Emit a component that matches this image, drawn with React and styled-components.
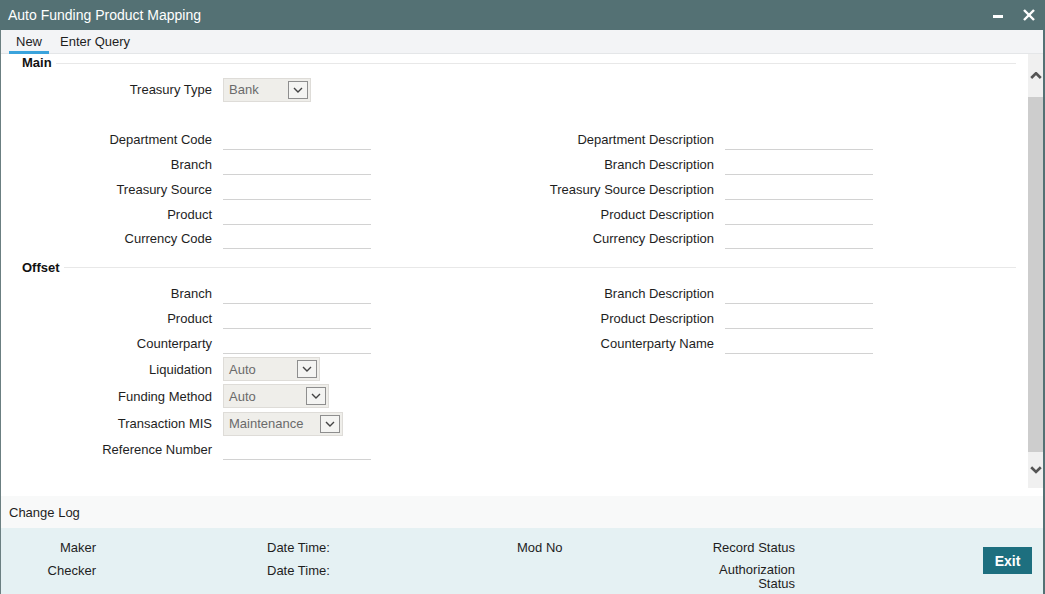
import React from "react";
import styled, { createGlobalStyle } from "styled-components";

const GlobalStyle = createGlobalStyle`
  html, body {
    margin: 0;
    padding: 0;
    background: #ffffff;
  }
  body {
    font-family: "Liberation Sans", Arial, sans-serif;
    font-size: 13px;
    color: #1e1e1e;
  }
`;

const mainLeft = [
    "Department Code",
    "Branch",
    "Treasury Source",
    "Product",
    "Currency Code",
];

const mainRight = [
    "Department Description",
    "Branch Description",
    "Treasury Source Description",
    "Product Description",
    "Currency Description",
];

const ChevronDown = ({ size = 10, stroke = "#444", width = 1.4 }) => (
    <svg width={size} height={size * 0.6} viewBox="0 0 10 6">
        <polyline points="1,1 5,5 9,1" fill="none" stroke={stroke} strokeWidth={width} />
    </svg>
);

const ChevronUp = ({ size = 10, stroke = "#444", width = 1.4 }) => (
    <svg width={size} height={size * 0.6} viewBox="0 0 10 6">
        <polyline points="1,5 5,1 9,5" fill="none" stroke={stroke} strokeWidth={width} />
    </svg>
);

const SelectBox = ({ value, width }) => (
    <Select width={width}>
        <SelectValue>{value}</SelectValue>
        <ArrowBox>
            <ChevronDown size={10} />
        </ArrowBox>
    </Select>
);

const FieldPair = ({ label, labelWidth, children }) => (
    <Pair labelWidth={labelWidth}>
        <Label>{label}</Label>
        {children || <TextInput />}
    </Pair>
);

const App = () => {
    return (
        <Window>
            <GlobalStyle />
            <TitleBar>
                <Title>Auto Funding Product Mapping</Title>
                <TitleControls>
                    <svg width="11" height="11" viewBox="0 0 11 11">
                        <rect x="0" y="5" width="10" height="3" fill="#fff" />
                    </svg>
                    <svg width="12" height="12" viewBox="0 0 12 12">
                        <line x1="1" y1="1" x2="11" y2="11" stroke="#fff" strokeWidth="2.4" />
                        <line x1="11" y1="1" x2="1" y2="11" stroke="#fff" strokeWidth="2.4" />
                    </svg>
                </TitleControls>
            </TitleBar>
            <Frame>
                <TabBar>
                    <Tab active>New</Tab>
                    <Tab>Enter Query</Tab>
                </TabBar>
                <Body>
                    <FormArea>
                        <SectionHeading>Main</SectionHeading>
                        <Row height={28} style={{ marginTop: 5.5 }}>
                            <FieldPair label="Treasury Type" labelWidth={190}>
                                <SelectBox value="Bank" width={88} />
                            </FieldPair>
                        </Row>
                        <RowGroup top={24}>
                            {mainLeft.map((label, i) => (
                                <Row key={label} height={24.75}>
                                    <FieldPair label={label} labelWidth={190} />
                                    <FieldPair label={mainRight[i]} labelWidth={343} />
                                </Row>
                            ))}
                        </RowGroup>
                        <SectionHeading style={{ marginTop: 9.5 }}>Offset</SectionHeading>
                        <RowGroup top={6.5}>
                            <Row height={24.75}>
                                <FieldPair label="Branch" labelWidth={190} />
                                <FieldPair label="Branch Description" labelWidth={343} />
                            </Row>
                            <Row height={24.75}>
                                <FieldPair label="Product" labelWidth={190} />
                                <FieldPair label="Product Description" labelWidth={343} />
                            </Row>
                            <Row height={24.75}>
                                <FieldPair label="Counterparty" labelWidth={190} />
                                <FieldPair label="Counterparty Name" labelWidth={343} />
                            </Row>
                            <Row height={27.25}>
                                <FieldPair label="Liquidation" labelWidth={190}>
                                    <SelectBox value="Auto" width={97} />
                                </FieldPair>
                            </Row>
                            <Row height={27.25}>
                                <FieldPair label="Funding Method" labelWidth={190}>
                                    <SelectBox value="Auto" width={106} />
                                </FieldPair>
                            </Row>
                            <Row height={27.25}>
                                <FieldPair label="Transaction MIS" labelWidth={190}>
                                    <SelectBox value="Maintenance" width={120} />
                                </FieldPair>
                            </Row>
                            <Row height={24.75}>
                                <FieldPair label="Reference Number" labelWidth={190} />
                            </Row>
                        </RowGroup>
                    </FormArea>
                    <ScrollBar>
                        <ScrollButton height={43}>
                            <ChevronUp size={12} stroke="#555" width={2.2} />
                        </ScrollButton>
                        <ScrollThumb />
                        <ScrollButton height={36}>
                            <ChevronDown size={12} stroke="#555" width={2.2} />
                        </ScrollButton>
                    </ScrollBar>
                </Body>
                <ChangeLog>Change Log</ChangeLog>
                <Footer>
                    <FooterCol width={95} align="right">
                        <FooterLine>Maker</FooterLine>
                        <FooterLine>Checker</FooterLine>
                    </FooterCol>
                    <FooterCol width={250} style={{ marginLeft: 171 }}>
                        <FooterLine>Date Time:</FooterLine>
                        <FooterLine>Date Time:</FooterLine>
                    </FooterCol>
                    <FooterCol width={160}>
                        <FooterLine>Mod No</FooterLine>
                    </FooterCol>
                    <FooterCol width={118} align="right">
                        <FooterLine>Record Status</FooterLine>
                        <WrappedLine>Authorization<br />Status</WrappedLine>
                    </FooterCol>
                    <ExitButton>Exit</ExitButton>
                </Footer>
            </Frame>
        </Window>
    );
};

export default App;

const Window = styled.div`
  width: 1045px;
  height: 594px;
  display: flex;
  flex-direction: column;
  overflow: hidden;
`;

const TitleBar = styled.div`
  height: 30px;
  flex: none;
  background: #547174;
  display: flex;
  align-items: center;
  justify-content: space-between;
  padding: 0 10px 0 8px;
`;

const Title = styled.div`
  color: #ffffff;
  font-size: 14px;
`;

const TitleControls = styled.div`
  display: flex;
  align-items: center;
  gap: 19px;
`;

const Frame = styled.div`
  flex: 1;
  display: flex;
  flex-direction: column;
  border-left: 1px solid #6b7f81;
  border-right: 2px solid #547174;
  min-height: 0;
`;

const TabBar = styled.div`
  height: 24px;
  flex: none;
  box-sizing: border-box;
  background: #f3f4f6;
  border-bottom: 1px solid #e4e6e8;
  display: flex;
  align-items: stretch;
  padding-left: 8px;
  gap: 4px;
`;

const Tab = styled.div`
  display: flex;
  align-items: center;
  padding: 0 7px;
  font-size: 13px;
  color: #1e1e1e;
  border-bottom: 3px solid ${(p) => (p.active ? "#3aa3dc" : "transparent")};
  padding-top: 2px;
  margin-bottom: -1px;
`;

const Body = styled.div`
  height: 442px;
  flex: none;
  display: flex;
  background: #ffffff;
`;

const FormArea = styled.div`
  flex: 1;
  padding: 2px 12px 0 21px;
  overflow: hidden;
`;

const SectionHeading = styled.div`
  display: flex;
  align-items: center;
  gap: 4px;
  font-weight: bold;
  font-size: 13px;
  line-height: 14px;
  color: #111;

  &::after {
    content: "";
    flex: 1;
    height: 1px;
    background: #e8e8e8;
  }
`;

const RowGroup = styled.div`
  margin-top: ${(p) => p.top}px;
`;

const Row = styled.div`
  height: ${(p) => p.height}px;
  display: flex;
  align-items: center;
`;

const Pair = styled.div`
  display: grid;
  grid-template-columns: ${(p) => p.labelWidth}px 148px;
  column-gap: 11px;
  align-items: center;
`;

const Label = styled.div`
  text-align: right;
  white-space: nowrap;
  color: #1e1e1e;
`;

const TextInput = styled.div`
  height: 20px;
  box-sizing: border-box;
  border-bottom: 1px solid #d2d2d2;
  margin-top: 1px;
`;

const Select = styled.div`
  width: ${(p) => p.width}px;
  height: 24px;
  box-sizing: border-box;
  background: #efeeea;
  border: 1px solid #dedcd8;
  display: flex;
  align-items: center;
  justify-content: space-between;
  padding: 0 2px 0 5px;
`;

const SelectValue = styled.span`
  color: #6a6a6a;
  font-size: 13px;
`;

const ArrowBox = styled.div`
  width: 20px;
  height: 18px;
  box-sizing: border-box;
  border: 1px solid #8e8e8e;
  background: #f4f4f2;
  display: flex;
  align-items: center;
  justify-content: center;
`;

const ScrollBar = styled.div`
  width: 15px;
  flex: none;
  margin-bottom: 8px;
  background: #f0f0f0;
  display: flex;
  flex-direction: column;
`;

const ScrollButton = styled.div`
  height: ${(p) => p.height}px;
  flex: none;
  display: flex;
  align-items: center;
  justify-content: center;
`;

const ScrollThumb = styled.div`
  flex: 1;
  background: #cdcdcd;
`;

const ChangeLog = styled.div`
  height: 32px;
  flex: none;
  background: #f8f9f9;
  display: flex;
  align-items: center;
  padding-left: 8px;
  font-size: 13px;
`;

const Footer = styled.div`
  flex: 1;
  background: #e5f1f3;
  display: flex;
  align-items: flex-start;
  padding-top: 7.5px;
`;

const FooterCol = styled.div`
  width: ${(p) => p.width}px;
  flex: none;
  text-align: ${(p) => p.align || "left"};
`;

const FooterLine = styled.div`
  line-height: 23px;
  white-space: nowrap;
`;

const WrappedLine = styled.div`
  line-height: 14px;
  margin-top: 4.5px;
`;

const ExitButton = styled.button`
  margin: 11.5px 11px 0 auto;
  width: 49px;
  height: 27px;
  border: none;
  background: #1d6f7f;
  color: #ffffff;
  font-family: "Liberation Sans", Arial, sans-serif;
  font-weight: bold;
  font-size: 14px;
  padding: 0;
  cursor: pointer;
`;
